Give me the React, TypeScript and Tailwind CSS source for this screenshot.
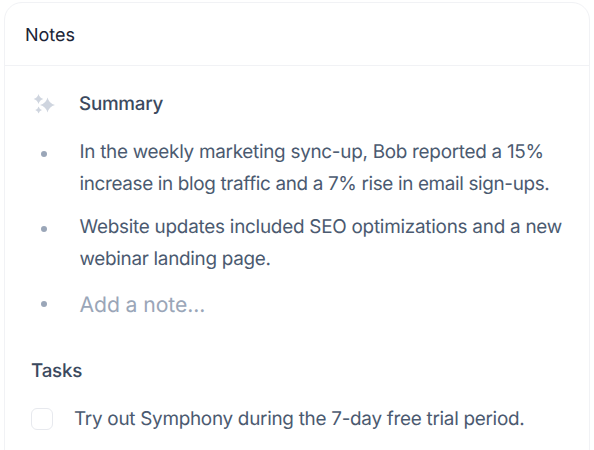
import { ReactNode } from 'react'

const notes = [
  [
    {
      text: 'In the weekly marketing sync-up, Bob reported a 15%',
      tracking: 'tracking-[-0.28px]',
    },
    {
      text: 'increase in blog traffic and a 7% rise in email sign-ups.',
      tracking: 'tracking-[-0.35px]',
    },
  ],
  [
    {
      text: 'Website updates included SEO optimizations and a new',
      tracking: 'tracking-[-0.25px]',
    },
    { text: 'webinar landing page.', tracking: 'tracking-[-0.3px]' },
  ],
]

const tasks = ['Try out Symphony during the 7-day free trial period.']

const SparklesIcon = () => (
  <svg viewBox="0 0 24 24" className="size-6 fill-[#cfd5df]">
    <path d="M16.5 5.4Q18 11.5 24 13Q18 14.5 16.5 20.6Q15 14.5 9 13Q15 11.5 16.5 5.4Z" />
    <path d="M7.5 2Q8.5 6 12.4 7Q8.5 8 7.5 12Q6.5 8 2.6 7Q6.5 6 7.5 2Z" />
    <path d="M7.6 14.6Q8.3 17.3 11 18Q8.3 18.7 7.6 21.4Q6.9 18.7 4.2 18Q6.9 17.3 7.6 14.6Z" />
  </svg>
)

const Bullet = ({ children }: { children: ReactNode }) => (
  <li className="flex">
    <span className="mt-[15px] ml-[10px] size-[6px] shrink-0 rounded-full bg-[#9aa6b8]" />
    <div className="ml-[32.5px] whitespace-nowrap">{children}</div>
  </li>
)

export default function App() {
  return (
    <main className="h-[450px] overflow-hidden bg-white px-1 pt-[2px] font-['Inter',sans-serif] [font-optical-sizing:none] [text-rendering:geometricPrecision]">
      <section className="h-[480px] rounded-[18px] border border-[#f1f2f5]">
        <header className="flex h-[63px] items-center border-b border-[#f1f2f5] px-5">
          <h1 className="pt-[2px] text-[18px] text-[#1b2436]">Notes</h1>
        </header>
        <div className="px-[26px] pt-6">
          <div className="flex h-7 items-center">
            <SparklesIcon />
            <h2 className="ml-6 pt-px text-[18.8px] font-medium tracking-[-0.25px] text-[#3b495e]">
              Summary
            </h2>
          </div>
          <ul className="mt-[18px] flex flex-col gap-[11px] text-[18.9px] leading-8 font-[370] text-[#4b5a70]">
            {notes.map((lines) => (
              <Bullet key={lines[0].text}>
                {lines.map(({ text, tracking }) => (
                  <p key={text} className={tracking}>
                    {text}
                  </p>
                ))}
              </Bullet>
            ))}
            <Bullet>
              <p className="pt-[3px] text-[21.2px] tracking-[-0.1px] text-[#9aa6b8]">
                Add a note...
              </p>
            </Bullet>
          </ul>
          <h2 className="mt-[36px] text-[18.8px] leading-7 font-medium tracking-[-0.25px] text-[#3b495e]">
            Tasks
          </h2>
          {tasks.map((task) => (
            <label
              key={task}
              className="mt-5 flex items-center text-[18.9px] leading-7 font-[370] tracking-[-0.28px] whitespace-nowrap text-[#4b5a70]"
            >
              <input
                type="checkbox"
                className="size-[22px] appearance-none rounded-md border border-[#e7e9ee]"
              />
              <span className="ml-[21px]">{task}</span>
            </label>
          ))}
        </div>
      </section>
    </main>
  )
}
